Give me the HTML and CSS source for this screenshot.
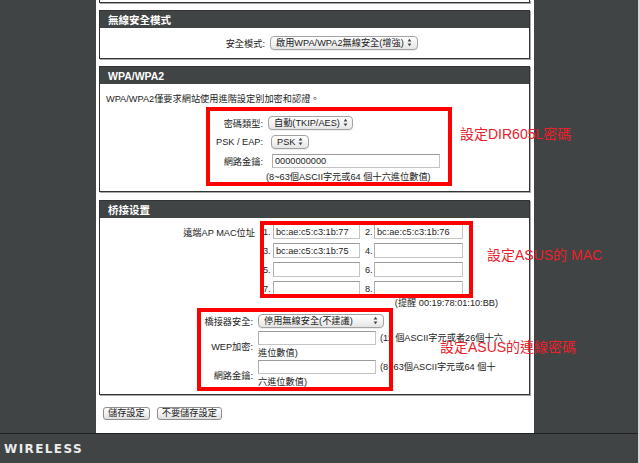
FILE: index.html
```html
<!DOCTYPE html>
<html lang="zh-Hant">
<head>
<meta charset="utf-8">
<title>WIRELESS</title>
<link rel="stylesheet" href="styles.css">
</head>
<body>
<div class="page">
  <aside class="side side-left"></aside>
  <main class="main">
    <div class="box box-cut"></div>

    <section class="box">
      <h2 class="box-head">無線安全模式</h2>
      <div class="box-body body-mode">
        <div class="row row-mode">
          <span class="lbl">安全模式:</span>
          <span class="sel sel-mode"><span class="sel-text">啟用WPA/WPA2無線安全(增強)</span><svg class="arr" viewBox="0 0 5 9" width="5" height="9"><path d="M0.6 3.6 L2.5 0.8 L4.4 3.6 Z M0.6 5.4 L2.5 8.2 L4.4 5.4 Z"/></svg></span>
        </div>
      </div>
    </section>

    <section class="box">
      <h2 class="box-head">WPA/WPA2</h2>
      <div class="box-body body-wpa">
        <p class="intro">WPA/WPA2僅要求網站使用進階設定別加密和認證。</p>
        <div class="row row-wpa">
          <span class="lbl">密碼類型:</span>
          <span class="sel sel-cipher"><span class="sel-text">自動(TKIP/AES)</span><svg class="arr" viewBox="0 0 5 9" width="5" height="9"><path d="M0.6 3.6 L2.5 0.8 L4.4 3.6 Z M0.6 5.4 L2.5 8.2 L4.4 5.4 Z"/></svg></span>
        </div>
        <div class="row row-wpa">
          <span class="lbl">PSK / EAP:</span>
          <span class="sel sel-psk"><span class="sel-text">PSK</span><svg class="arr" viewBox="0 0 5 9" width="5" height="9"><path d="M0.6 3.6 L2.5 0.8 L4.4 3.6 Z M0.6 5.4 L2.5 8.2 L4.4 5.4 Z"/></svg></span>
        </div>
        <div class="row row-wpa">
          <span class="lbl">網路金鑰:</span>
          <input class="txt txt-key" type="text" value="0000000000">
        </div>
        <div class="hint hint-wpa">(8~63個ASCII字元或64 個十六進位數值)</div>
      </div>
    </section>

    <section class="box">
      <h2 class="box-head">桥接设置</h2>
      <div class="box-body body-bridge">
        <div class="row row-mac">
          <span class="lbl">遠端AP MAC位址</span>
          <span class="macs"><span class="num">1.</span><input class="txt mac" type="text" value="bc:ae:c5:c3:1b:77"><span class="num num2">2.</span><input class="txt mac mac2" type="text" value="bc:ae:c5:c3:1b:76"></span>
        </div>
        <div class="row row-mac">
          <span class="lbl"></span>
          <span class="macs"><span class="num">3.</span><input class="txt mac" type="text" value="bc:ae:c5:c3:1b:75"><span class="num num2">4.</span><input class="txt mac mac2" type="text" value=""></span>
        </div>
        <div class="row row-mac">
          <span class="lbl"></span>
          <span class="macs"><span class="num">5.</span><input class="txt mac" type="text" value=""><span class="num num2">6.</span><input class="txt mac mac2" type="text" value=""></span>
        </div>
        <div class="row row-mac">
          <span class="lbl"></span>
          <span class="macs"><span class="num">7.</span><input class="txt mac" type="text" value=""><span class="num num2">8.</span><input class="txt mac mac2" type="text" value=""></span>
        </div>
        <div class="hint hint-mac">(提醒 00:19:78:01:10:BB)</div>
        <div class="row row-br row-br-sel">
          <span class="lbl">橋接器安全:</span>
          <span class="sel sel-bridge"><span class="sel-text">停用無線安全(不建議)</span><svg class="arr" viewBox="0 0 5 9" width="5" height="9"><path d="M0.6 3.6 L2.5 0.8 L4.4 3.6 Z M0.6 5.4 L2.5 8.2 L4.4 5.4 Z"/></svg></span>
        </div>
        <div class="row row-br row-br-two">
          <span class="lbl">WEP加密:</span>
          <span class="cell2">
            <span class="line1"><input class="txt txt-wep" type="text" value=""><span class="note">(11 個ASCII字元或者26個十六</span></span>
            <span class="line2">進位數值)</span>
          </span>
        </div>
        <div class="row row-br row-br-two">
          <span class="lbl">網路金鑰:</span>
          <span class="cell2">
            <span class="line1"><input class="txt txt-wep" type="text" value=""><span class="note">(8~63個ASCII字元或64 個十</span></span>
            <span class="line2">六進位數值)</span>
          </span>
        </div>
      </div>
    </section>

    <div class="actions">
      <button class="btn" type="button">儲存設定</button>
      <button class="btn" type="button">不要儲存設定</button>
    </div>
  </main>
  <aside class="side side-right"></aside>
  <footer class="foot">WIRELESS</footer>

  <div class="mark mark-wpa"></div>
  <div class="mark mark-mac"></div>
  <div class="mark mark-br"></div>
  <div class="note-red note-wpa">設定DIR605L密碼</div>
  <div class="note-red note-mac">設定ASUS的 MAC</div>
  <div class="note-red note-br">設定ASUS的連線密碼</div>
</div>
</body>
</html>
```

FILE: styles.css
```css
html, body {
  margin: 0;
  padding: 0;
}
body {
  background: #d9d9d9;
  font-family: "Liberation Sans", "Noto Sans CJK TC", sans-serif;
  font-size: 9.2px;
  color: #1c1c1c;
  width: 640px;
  height: 463px;
  overflow: hidden;
}
.page {
  position: relative;
  width: 638px;
  height: 463px;
  display: grid;
  grid-template-columns: 96px 438px 104px;
  grid-template-rows: 433px 30px;
}
.side {
  background: #404445;
}
.main {
  background: #fff;
  padding: 0 4px 0 3px;
  overflow: hidden;
}
.box {
  border: 1px solid #333;
  box-shadow: 1px 1px 0 #a9a9a9;
  background: #fff;
  margin-top: 7px;
}
.box-cut {
  margin-top: 0;
  height: 2px;
  border-top: none;
}
.box + .box + .box + .box {
  margin-top: 8px;
}
.box-head {
  margin: 0;
  height: 17px;
  line-height: 18px;
  padding-left: 8px;
  background: #404445;
  color: #fff;
  font-family: "Liberation Sans", "Noto Sans CJK TC", sans-serif;
  font-size: 10.5px;
  font-weight: bold;
}
.box-body {
  position: relative;
}
.body-mode {
  padding: 5px 0 6px;
}
.body-wpa {
  padding: 8px 0 7px;
}
.body-bridge {
  padding: 4px 0 5px;
}
.intro {
  margin: 0 0 7px;
  padding-left: 6px;
  line-height: 14px;
  height: 14px;
}
.row {
  display: grid;
  align-items: center;
  justify-items: start;
  height: 19px;
}
.lbl {
  justify-self: stretch;
  text-align: right;
  white-space: nowrap;
}
.row-mode {
  grid-template-columns: 165px auto;
  column-gap: 5px;
}
.row-wpa {
  grid-template-columns: 163px auto;
  column-gap: 5px;
}
.row-mac {
  grid-template-columns: 155px auto;
  column-gap: 8px;
}
.row-br {
  grid-template-columns: 153px auto;
  column-gap: 5px;
}
.row-br-sel {
  height: 21px;
}
.row-br-two {
  height: 29px;
}
.hint {
  white-space: nowrap;
}
.hint-wpa {
  height: 14px;
  line-height: 14px;
  padding-left: 166px;
}
.hint-mac {
  height: 12px;
  line-height: 11px;
  text-align: right;
  padding-right: 31px;
}

/* select look-alike */
.sel {
  box-sizing: border-box;
  display: inline-flex;
  align-items: center;
  justify-content: space-between;
  gap: 3px;
  height: 14px;
  border: 1px solid #a3a3a3;
  border-radius: 4px;
  background: linear-gradient(#ffffff, #f3f3f3 50%, #e4e4e4);
  box-shadow: 0 1px 0 rgba(0, 0, 0, 0.07);
  padding: 0 5px 0 5px;
  white-space: nowrap;
  line-height: 12px;
}
.arr {
  flex: none;
  fill: #444;
}
.sel-mode {
  min-width: 148px;
}
.sel-cipher {
  min-width: 81px;
  padding-right: 4px;
}
.sel-psk {
  min-width: 37px;
  margin-left: 3px;
}
.sel-bridge {
  min-width: 126px;
}

/* text inputs */
.txt {
  box-sizing: border-box;
  height: 15px;
  border: 1px solid #c4c4c4;
  border-top-color: #9c9c9c;
  border-left-color: #b0b0b0;
  background: #fff;
  margin: 0;
  padding: 0 2px;
  font-family: "Liberation Sans", "Noto Sans CJK TC", sans-serif;
  font-size: 9.2px;
  color: #1c1c1c;
  outline: none;
}
.txt-key {
  width: 168px;
  height: 14px;
  margin-left: 4px;
}
.macs {
  display: flex;
  align-items: center;
}
.num {
  width: 10px;
}
.num2 {
  width: 9px;
  margin-left: 5px;
}
.mac {
  width: 87px;
}
.mac2 {
  width: 89px;
}
.cell2 {
  display: flex;
  flex-direction: column;
}
.line1, .line2 {
  height: 14.5px;
  line-height: 14.5px;
  white-space: nowrap;
}
.line1 {
  display: flex;
  align-items: center;
}
.txt-wep {
  width: 118px;
  height: 14px;
}
.note {
  margin-left: 4px;
}

/* buttons */
.actions {
  display: flex;
  gap: 7px;
  margin-top: 12px;
  padding-left: 4px;
}
.btn {
  height: 13px;
  box-sizing: border-box;
  margin: 0;
  padding: 0 4px;
  border: 1px solid #8f8f8f;
  border-radius: 3px;
  background: linear-gradient(#ffffff, #f0f0f0 55%, #dedede);
  font-family: "Liberation Sans", "Noto Sans CJK TC", sans-serif;
  font-size: 9.2px;
  line-height: 11px;
  color: #1c1c1c;
}

/* footer */
.foot {
  grid-column: 1 / -1;
  background: #404445;
  border-top: 1px solid #1f2122;
  padding: 2px 0 0 4px;
  line-height: 27px;
  color: #ececec;
  font-family: "DejaVu Sans", sans-serif;
  font-weight: bold;
  font-size: 12px;
  letter-spacing: 1.4px;
}

/* annotations drawn over the page */
.mark {
  position: absolute;
  box-sizing: border-box;
  border: 4px solid #ff0000;
}
.mark-wpa {
  left: 206px;
  top: 107px;
  width: 246px;
  height: 79px;
}
.mark-mac {
  left: 260px;
  top: 221px;
  width: 213px;
  height: 77px;
}
.mark-br {
  left: 197px;
  top: 308px;
  width: 196px;
  height: 83px;
}
.note-red {
  position: absolute;
  color: #e8212b;
  font-family: "Liberation Sans", "Noto Sans CJK TC", sans-serif;
  font-size: 14px;
  line-height: 16px;
  white-space: nowrap;
}
.note-wpa {
  left: 460px;
  top: 126px;
}
.note-mac {
  left: 487px;
  top: 247px;
}
.note-br {
  left: 440px;
  top: 339px;
}
```
